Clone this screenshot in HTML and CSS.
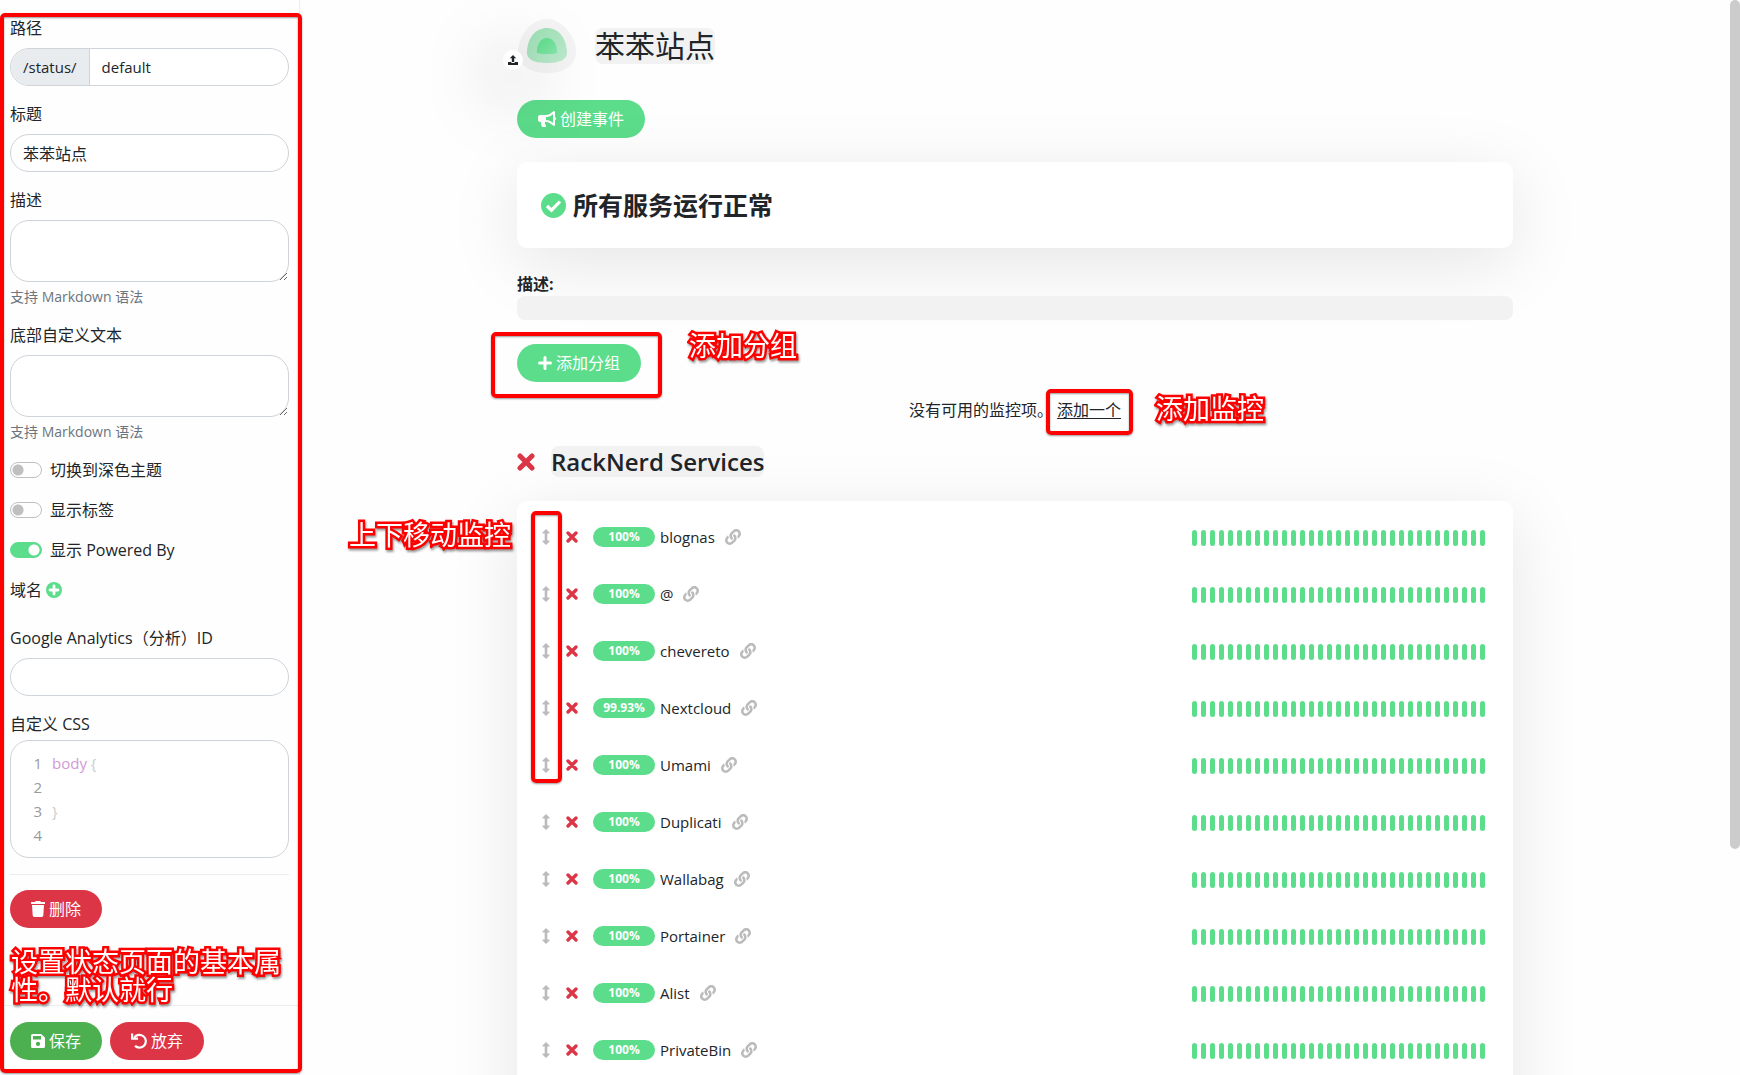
FILE: index.html
```html
<!DOCTYPE html>
<html lang="zh-CN">
<head>
<meta charset="utf-8">
<title>苯苯站点</title>
<link rel="stylesheet" href="styles.css">
</head>
<body>
<svg class="sprite" aria-hidden="true">
  <symbol id="i-x" viewBox="0 0 18 18"><path d="M3 3l12 12M15 3L3 15" fill="none" stroke="currentColor" stroke-width="5" stroke-linecap="round"/></symbol>
  <symbol id="i-arrows" viewBox="0 0 8 16"><path d="M4 0l3.500 3.600q.500.900-.500.900H5.300v7H7q1 0 .500.900L4 16 .500 12.400Q0 11.500 1 11.500h1.700v-7H1q-1 0-.500-.900z" fill="currentColor"/></symbol>
  <symbol id="i-link" viewBox="0 0 512 512"><path fill="currentColor" d="M326.612 185.391c59.747 59.809 58.927 155.698.36 214.590-.11.120-.240.250-.360.370l-67.200 67.200c-59.270 59.270-155.699 59.262-214.960 0-59.270-59.260-59.270-155.700 0-214.960l37.106-37.106c9.840-9.840 26.786-3.300 27.294 10.606.648 17.722 3.826 35.527 9.690 52.721 1.986 5.822.567 12.262-3.783 16.612l-13.087 13.087c-28.026 28.026-28.905 73.660-1.155 101.960 28.024 28.579 74.086 28.749 102.325.510l67.200-67.190c28.191-28.191 28.073-73.757 0-101.830-3.701-3.694-7.429-6.564-10.341-8.569a16.037 16.037 0 0 1-6.947-12.606c-.396-10.567 3.348-21.456 11.698-29.806l21.054-21.055c5.521-5.521 14.182-6.199 20.584-1.731a152.482 152.482 0 0 1 20.522 17.197zM467.547 44.449c-59.261-59.262-155.690-59.270-214.960 0l-67.200 67.200c-.120.120-.250.250-.360.370-58.566 58.892-59.387 154.781.360 214.590a152.454 152.454 0 0 0 20.521 17.196c6.402 4.468 15.064 3.789 20.584-1.731l21.054-21.055c8.350-8.350 12.094-19.239 11.698-29.806a16.037 16.037 0 0 0-6.947-12.606c-2.912-2.005-6.640-4.875-10.341-8.569-28.073-28.073-28.191-73.639 0-101.830l67.200-67.190c28.239-28.239 74.300-28.069 102.325.510 27.750 28.300 26.872 73.934-1.155 101.960l-13.087 13.087c-4.350 4.350-5.769 10.790-3.783 16.612 5.864 17.194 9.042 34.999 9.690 52.721.509 13.906 17.454 20.446 27.294 10.606l37.106-37.106c59.271-59.259 59.271-155.699.001-214.959z"/></symbol>
</svg>

<div class="shell">
  <aside class="sidebar">
    <form class="settings">
      <div class="field">
        <label for="slug">路径</label>
        <div class="input-group"><span class="prefix">/status/</span><input id="slug" type="text" value="default"></div>
      </div>
      <div class="field">
        <label for="title">标题</label>
        <input id="title" class="control" type="text" value="苯苯站点">
      </div>
      <div class="field">
        <label for="desc">描述</label>
        <textarea id="desc" class="control"></textarea>
        <small class="help">支持 Markdown 语法</small>
      </div>
      <div class="field">
        <label for="footer-text">底部自定义文本</label>
        <textarea id="footer-text" class="control"></textarea>
        <small class="help">支持 Markdown 语法</small>
      </div>
      <div class="switch"><input type="checkbox" id="dark"><label for="dark">切换到深色主题</label></div>
      <div class="switch"><input type="checkbox" id="tags"><label for="tags">显示标签</label></div>
      <div class="switch"><input type="checkbox" id="powered" checked><label for="powered">显示 Powered By</label></div>
      <div class="domains">域名
        <button type="button" class="plain add-domain" aria-label="添加域名"><svg width="16" height="16" viewBox="0 0 16 16"><circle cx="8" cy="8" r="8" fill="currentColor"/><path d="M8 4v8M4 8h8" stroke="#fff" stroke-width="2.800" stroke-linecap="round"/></svg></button>
      </div>
      <div class="field">
        <label for="ga">Google Analytics（分析）ID</label>
        <input id="ga" class="control" type="text">
      </div>
      <div class="css-label">自定义 CSS</div>
      <ol class="editor">
        <li><code><span class="selector">body</span> {</code></li>
        <li></li>
        <li><code>}</code></li>
        <li></li>
      </ol>
      <hr>
      <button type="button" class="btn danger"><svg width="14" height="16" viewBox="0 0 14 16"><path fill="currentColor" d="M0 1.500Q0 1 .500 1H4l.500-.700Q4.700 0 5.200 0h3.600q.500 0 .700.300L10 1h3.500q.500 0 .500.500V3H0zM1 4h12l-.700 10.600Q12.200 16 10.800 16H3.200Q1.800 16 1.700 14.600z"/></svg>删除</button>
    </form>
    <p class="note sidebar-note">设置状态页面的基本属性。默认就行</p>
    <div class="actions">
      <button type="button" class="btn save"><svg width="14" height="16" viewBox="0 0 14 16"><path fill="currentColor" fill-rule="evenodd" d="M1.500 1h8.300q.600 0 1 .400l2.800 2.800q.400.400.400 1v8.300q0 1.500-1.500 1.500h-11Q0 15 0 13.500v-11Q0 1 1.500 1zM2 3v3.600h8V3zM7 8.800a2.100 2.100 0 1 0 .010 0z"/></svg>保存</button>
      <button type="button" class="btn danger"><svg width="16" height="16" viewBox="0 0 16 16"><path d="M3.200 4.600A6.400 6.400 0 1 1 4 12.900" fill="none" stroke="currentColor" stroke-width="2.200"/><path fill="currentColor" d="M0 .500h2.200v4H7v2.200H0z"/></svg>放弃</button>
    </div>
    <div class="mark mark-sidebar"></div>
  </aside>

  <main class="page">
    <div class="container">
      <header class="site-head">
        <div class="logo">
          <svg width="60" height="56" viewBox="0 0 60 56">
            <defs><linearGradient id="g1" x1="0" y1="0" x2="1" y2="1"><stop offset="0" stop-color="#9be0b3"/><stop offset="1" stop-color="#bfead0"/></linearGradient>
            <linearGradient id="g2" x1="0" y1="0" x2="1" y2="1"><stop offset="0" stop-color="#5cdd8b"/><stop offset="1" stop-color="#86e6a9"/></linearGradient></defs>
            <path fill="#f4f4f4" d="M30 1C45 1 59 18 59 34C59 48 46 55 30 55S1 48 1 34C1 18 14 1 30 1z"/>
            <path fill="url(#g1)" d="M30 10C41 10 49 19 50 33C51 42 42 45 30 45S9 42 10 33C11 19 19 10 30 10z"/>
            <path fill="url(#g2)" d="M30 20C36 20 40 26 40 33C41 36 37 36 30 36S19 36 20 33C20 26 24 20 30 20z"/>
          </svg>
          <button type="button" class="plain upload" aria-label="上传图标"><svg width="10" height="10" viewBox="0 0 10 10"><path fill="currentColor" d="M5 0l3.200 3.300H6.200V7H3.800V3.300H1.800zM0 7h3q.300 1 1 1h2q.700 0 1-1h3v3H0z"/></svg></button>
        </div>
        <h1><span class="editable">苯苯站点</span></h1>
      </header>

      <button type="button" class="btn primary"><svg width="18" height="16" viewBox="0 0 576 512"><path fill="currentColor" d="M576 240c0-23.630-12.950-44.040-32-55.120V32.010C544 23.260 537.020 0 512 0c-7.120 0-14.190 2.380-19.980 7.020l-85.030 68.030C364.280 109.190 310.660 128 256 128H64c-35.350 0-64 28.650-64 64v96c0 35.350 28.650 64 64 64h33.700c-1.390 10.480-2.180 21.140-2.180 32 0 39.770 9.260 77.350 25.560 110.940 5.190 10.690 16.520 17.060 28.400 17.060h74.280c26.050 0 41.690-29.840 25.900-50.560-16.400-21.520-26.150-48.360-26.150-77.440 0-11.110 1.620-21.790 4.410-32H256c54.660 0 108.280 18.810 150.980 52.950l85.030 68.030a32.023 32.023 0 0 0 19.980 7.020c24.920 0 32-22.780 32-32V295.130C563.050 284.040 576 263.630 576 240zm-96 141.420l-33.050-26.440C392.950 311.780 325.120 288 256 288v-96c69.120 0 136.950-23.780 190.950-66.980L480 98.580v282.840z"/></svg>创建事件</button>

      <section class="card status">
        <svg width="25" height="25" viewBox="0 0 25 25"><circle cx="12.500" cy="12.500" r="12.500" fill="#5cdd8b"/><path d="M6 13l4.500 4.200L19 8.500" fill="none" stroke="#fff" stroke-width="3.200"/></svg>
        <h2>所有服务运行正常</h2>
      </section>

      <section class="description">
        <strong>描述:</strong>
        <div class="editable-block"></div>
      </section>

      <div class="group-add">
        <button type="button" class="btn primary"><svg width="14" height="14" viewBox="0 0 14 14"><path d="M7 1.500v11M1.500 7h11" stroke="currentColor" stroke-width="3" stroke-linecap="round"/></svg>添加分组</button>
        <div class="mark mark-group"></div>
        <p class="note note-group">添加分组</p>
      </div>

      <p class="empty">没有可用的监控项。 <span class="add-one"><a href="#add">添加一个</a><span class="mark mark-one"></span><span class="note note-one">添加监控</span></span></p>

      <div class="group-head">
        <button type="button" class="plain remove" aria-label="删除分组"><svg width="18" height="18"><use href="#i-x"/></svg></button>
        <h2><span class="editable">RackNerd Services</span></h2>
      </div>
      <section class="card monitors">
        <ul id="monitors"></ul>
        <div class="mark mark-arrows"></div>
        <p class="note note-arrows">上下移动监控</p>
      </section>
    </div>
  </main>
  <div class="scrollbar"><div class="thumb"></div></div>
</div>
<script src="monitors.js"></script>
</body>
</html>
```
FILE: monitors.js
```js
const monitors = [
  ["blognas", "100%"], ["@", "100%"], ["chevereto", "100%"], ["Nextcloud", "99.93%"],
  ["Umami", "100%"], ["Duplicati", "100%"], ["Wallabag", "100%"], ["Portainer", "100%"],
  ["Alist", "100%"], ["PrivateBin", "100%"]
];
const BEATS = 33;
document.getElementById("monitors").innerHTML = monitors.map(([name, uptime]) => `
  <li class="monitor">
    <svg class="handle" width="8" height="16"><use href="#i-arrows"/></svg>
    <button type="button" class="plain remove" aria-label="删除 ${name}"><svg width="12" height="12"><use href="#i-x"/></svg></button>
    <span class="badge">${uptime}</span>
    <span class="name">${name}</span>
    <a class="link" href="#${name}" aria-label="${name}"><svg width="16" height="16"><use href="#i-link"/></svg></a>
    <div class="beats">${"<i></i>".repeat(BEATS)}</div>
  </li>`).join("");
```
FILE: styles.css
```css
* { box-sizing: border-box; }

body {
  margin: 0;
  background: #fefefe;
  color: #212529;
  font: 16px/24px "Open Sans", "Noto Sans CJK SC", sans-serif;
}

h1, h2, p, ul, ol { margin: 0; padding: 0; }
ul, ol { list-style: none; }
svg { display: block; flex: none; }
.sprite { position: absolute; width: 0; height: 0; }
input, textarea, button { font: inherit; color: inherit; }

.shell {
  display: grid;
  grid-template-columns: 300px minmax(0, 1fr) 10px;
  grid-template-rows: minmax(0, 1fr);
  height: 100vh;
  overflow: hidden;
}

/* Sidebar */
.sidebar {
  position: relative;
  z-index: 1;
  display: flex;
  flex-direction: column;
  border-right: 1px solid #ededed;
}
.settings { padding: 16px 10px 0; }
.field { display: flex; flex-direction: column; margin-bottom: 16px; }
.field label { margin-bottom: 8px; }
.control, .input-group {
  width: 100%;
  height: 38px;
  border: 1px solid #ced4da;
  border-radius: 19px;
  background: #fff;
}
.control { padding: 6px 12px; outline: 0; }
textarea.control { display: block; height: 62px; resize: vertical; }
.input-group { display: flex; overflow: hidden; font-size: 15px; }
.prefix {
  padding: 6px 12px;
  border-right: 1px solid #ced4da;
  background: #e9ecef;
}
.input-group input {
  flex: 1;
  min-width: 0;
  padding: 0 12px;
  border: 0;
  background: none;
  outline: 0;
}
.help { margin-top: 4px; color: #6c757d; font-size: 14px; line-height: 21px; }

.switch { display: flex; align-items: center; gap: 8px; margin-bottom: 16px; }
.switch input {
  appearance: none;
  width: 32px;
  height: 16px;
  margin: 0;
  border: 1px solid #bfbfbf;
  border-radius: 8px;
  background: radial-gradient(circle at 7px 7px, #bfbfbf 5px, transparent 6px);
}
.switch input:checked {
  border-color: #5cdd8b;
  background: radial-gradient(circle at 23px 7px, #fff 5px, #5cdd8b 6px);
}
.domains { display: flex; align-items: center; gap: 4px; margin-bottom: 24px; }
.plain { display: block; padding: 0; border: 0; background: none; }
.add-domain { color: #5cdd8b; }

.css-label { margin-bottom: 4px; }
.editor {
  height: 118px;
  padding: 10px 20px;
  border: 1px solid #ced4da;
  border-radius: 19px;
  background: #fff;
  color: #ccc;
  font-size: 15px;
  counter-reset: line;
}
.editor li { display: flex; gap: 10px; height: 24px; counter-increment: line; }
.editor li::before { content: counter(line); width: 11px; color: #999; text-align: right; }
.editor code { font: inherit; }
.selector { color: #d19ad6; }
hr { margin: 16px 0 15px; border: 0; border-top: 1px solid #ededed; }

.btn {
  display: inline-flex;
  align-items: center;
  gap: 4px;
  height: 38px;
  padding: 0 21px;
  border: 0;
  border-radius: 19px;
  color: #fff;
}
.primary { background: #5cdd8b; }
.danger { background: #dc3545; }
.save { background: #4caf50; }

.sidebar-note { width: 282px; margin: 20px 0 0 11px; }
.actions {
  display: flex;
  gap: 8px;
  height: 70px;
  margin-top: auto;
  padding: 16px 10px;
  border-top: 1px solid #ededed;
}

/* Page */
.page { min-width: 0; }
.container { max-width: 1020px; margin: 0 auto; padding: 18px 12px 0; }
.site-head { display: flex; align-items: center; gap: 18px; height: 56px; margin-bottom: 26px; }
.logo { position: relative; }
.upload {
  position: absolute;
  left: -14px;
  bottom: 4px;
  display: grid;
  place-items: center;
  width: 20px;
  height: 20px;
  border-radius: 50%;
  background: #fff;
  box-shadow: 0 15px 70px rgba(0, 0, 0, 0.9);
}
.site-head h1 { font-size: 30px; font-weight: 400; line-height: 36px; }
.editable { display: block; border-radius: 8px; background: #f2f2f2; }

.card {
  position: relative;
  border-radius: 10px;
  background: #fff;
  box-shadow: 0 15px 70px rgba(0, 0, 0, 0.1);
}
.status { display: flex; align-items: center; gap: 7px; height: 86px; margin: 24px 0; padding: 0 24px; }
.status h2 { font-size: 25px; font-weight: 700; line-height: 38px; }
.description { position: relative; }
.description strong { display: block; }
.editable-block { height: 24px; border-radius: 8px; background: #f2f2f2; }

.group-add { position: relative; margin: 24px 0 16px; display: flex; }
.empty { text-align: center; }
.add-one { position: relative; }
.add-one a { color: inherit; text-underline-offset: 2px; }

.group-head { position: relative; display: flex; align-items: center; gap: 16px; margin: 24px 0; }
.group-head h2 { font-size: 24px; font-weight: 600; line-height: 31px; }
.remove { color: #dc3545; }

.monitors { padding: 7px 28px 60px 25px; }
.monitor { display: flex; align-items: center; height: 57px; font-size: 15px; }
.handle { color: #bbb; }
.monitor .remove { margin: 0 15px 0 16px; }
.badge {
  width: 62px;
  margin-right: 5px;
  border-radius: 10px;
  background: #5cdd8b;
  color: #fff;
  font-size: 12px;
  font-weight: 700;
  line-height: 20px;
  text-align: center;
}
.link { margin-left: 10px; color: #bbb; }
.beats { display: flex; gap: 4px; margin: 3px 0 0 auto; }
.beats i { width: 5px; height: 16px; border-radius: 3px; background: #5cdd8b; }

.scrollbar { position: relative; z-index: 1; }
.thumb { height: 79%; border-radius: 5px; background: #ccc; }

/* Red annotations lying over the page */
.mark {
  position: absolute;
  border: 4px solid #f00;
  border-radius: 5px;
  box-shadow: 0 1px 2px rgba(0, 0, 0, 0.4), inset 0 1px 2px rgba(0, 0, 0, 0.4);
  pointer-events: none;
}
.mark-sidebar { inset: 13px -3px 2px 0; }
.mark-group { left: -26px; top: -12px; width: 171px; height: 66px; }
.mark-one { left: -11px; top: -10px; width: 87px; height: 46px; }
.mark-arrows { left: 14px; top: 10px; width: 31px; height: 272px; }
.note {
  color: #fff;
  font-size: 27px;
  line-height: 28px;
  -webkit-text-stroke: 5px #f00;
  paint-order: stroke fill;
  filter: drop-shadow(1px 2px 1px rgba(0, 0, 0, 0.4));
}
.note-group, .note-one, .note-arrows { position: absolute; white-space: nowrap; }
.note-group { left: 172px; top: -12px; }
.note-one { left: 99px; top: -4px; }
.note-arrows { right: 100%; top: 20px; margin-right: 6px; }
```
